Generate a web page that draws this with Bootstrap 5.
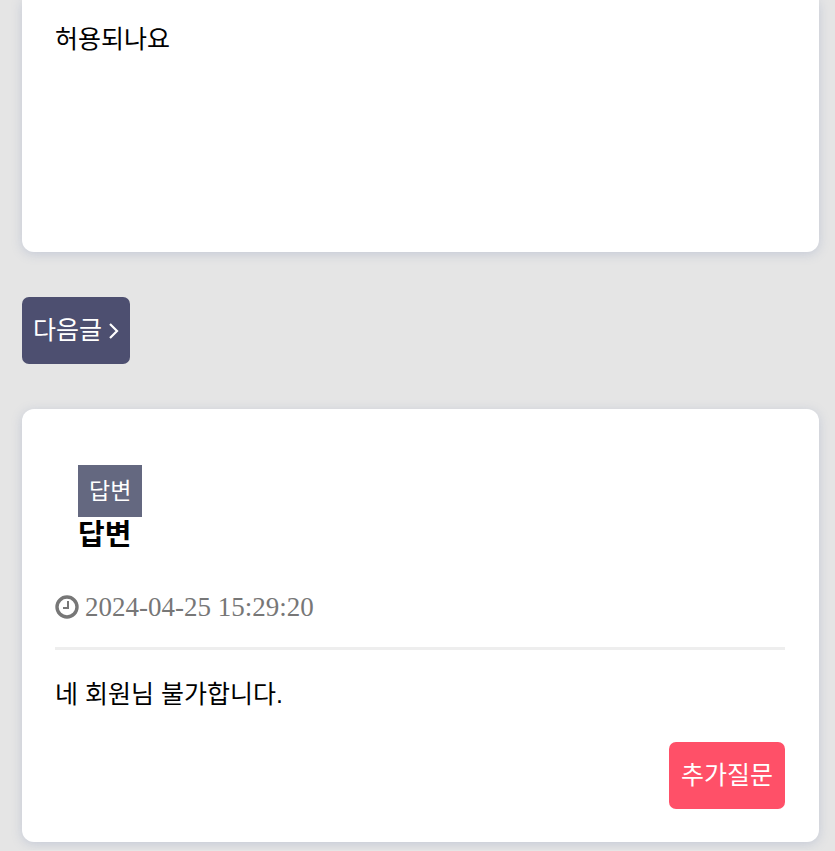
<!DOCTYPE html>
<html lang="ko">
<head>
<meta charset="utf-8">
<meta name="viewport" content="width=device-width, initial-scale=1">
<title>답변</title>
<link href="https://cdn.jsdelivr.net/npm/bootstrap@5.3.0/dist/css/bootstrap.min.css" rel="stylesheet">
<style>
  body { background: #e5e5e5; color: #000; font-family: "Liberation Sans", "Noto Sans CJK KR", sans-serif; font-size: 25px; line-height: 36px; }
  .page { padding: 0 16px 8px 22px; }
  .panel { background: #fff; border-radius: 12px; box-shadow: 0 2px 11px rgba(110, 130, 175, .28); padding: 33px 34px 33px 33px; }
  .panel-question { border-top-left-radius: 0; border-top-right-radius: 0; min-height: 252px; padding-top: 21px; }
  .panel-answer { padding-top: 56px; }
  .action { --bs-btn-color: #fff; --bs-btn-hover-color: #fff; --bs-btn-padding-x: 12px; --bs-btn-padding-y: 15px; --bs-btn-border-width: 0; --bs-btn-border-radius: 7px; --bs-btn-line-height: 37px; --bs-btn-font-size: 25px; font-family: inherit; }
  .action-next { --bs-btn-padding-x: 11px; --bs-btn-bg: #4d4f70; --bs-btn-hover-bg: #414360; margin: 45px 0; }
  .action-next span { gap: 7px; }
  .action-ask { --bs-btn-bg: #ff5068; --bs-btn-hover-bg: #ec3f58; }
  .heading { padding: 0 23px; }
  .tag { background: #646880; color: #fff; font-size: 23px; line-height: 34px; padding: 9px 11px; }
  .heading h2 { font-size: 29px; line-height: 36px; font-weight: 700; }
  .stamp { color: #777; font-family: "Liberation Serif", serif; font-size: 27px; line-height: 36px; margin-top: 36px; padding-bottom: 22px; border-bottom: 3px solid #eee; gap: 6px; }
  .reply { margin: 26px 0 30px; }
</style>
<script src="https://cdn.jsdelivr.net/npm/bootstrap@5.3.0/dist/js/bootstrap.bundle.min.js" defer></script>
</head>
<body>
<main class="page">
  <section class="panel panel-question">
    <p class="mb-0">허용되나요</p>
  </section>

  <a href="#next" class="btn action action-next d-table"><span class="d-flex align-items-center">다음글
    <svg width="10" height="16" viewBox="0 0 10 16" fill="none" stroke="currentColor" stroke-width="2.2" aria-hidden="true"><path d="M1 1l7 7-7 7"/></svg></span>
  </a>

  <article class="panel panel-answer">
    <header class="heading d-flex flex-column align-items-start">
      <span class="tag">답변</span>
      <h2 class="mb-0">답변</h2>
    </header>
    <div class="stamp d-flex align-items-center">
      <svg width="24" height="24" viewBox="0 0 24 24" fill="none" stroke="currentColor" aria-hidden="true"><circle cx="12" cy="12" r="10" stroke-width="3.4"/><path d="M13 6v7H8" stroke-width="2"/></svg>
      <time datetime="2024-04-25T15:29:20">2024-04-25 15:29:20</time>
    </div>
    <p class="reply">네 회원님 불가합니다.</p>
    <div class="d-flex justify-content-end">
      <button type="button" class="btn action action-ask">추가질문</button>
    </div>
  </article>
</main>
</body>
</html>
